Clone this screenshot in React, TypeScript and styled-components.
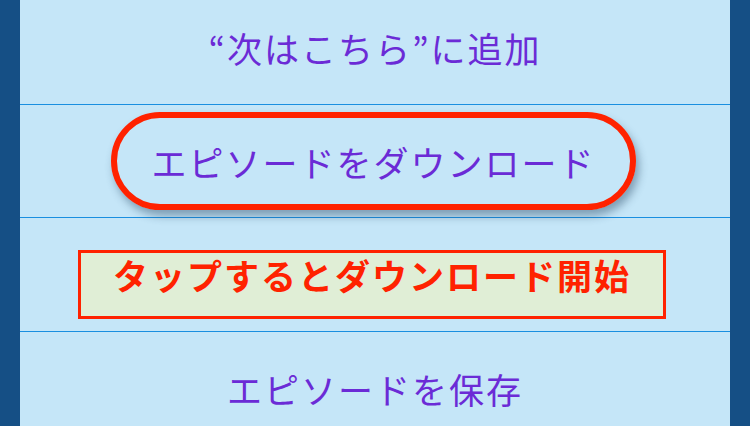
import styled, { createGlobalStyle } from "styled-components";

const GlobalStyle = createGlobalStyle`
  html, body {
    margin: 0;
    padding: 0;
    background: #c5e6f8;
    font-family: "Noto Sans CJK JP", "Noto Sans", sans-serif;
  }
`;

const Page = styled.div`
  display: flex;
  width: 750px;
  height: 426px;
  overflow: hidden;
`;

const SideBar = styled.div`
  width: 20px;
  flex-shrink: 0;
  background: #154f85;
`;

const Content = styled.div`
  flex: 1;
  display: flex;
  flex-direction: column;
  background: #c5e6f8;
`;

const Row = styled.div<{ $height: number; $last?: boolean; $padBottom?: number }>`
  display: flex;
  align-items: center;
  justify-content: center;
  height: ${props => props.$height}px;
  padding-bottom: ${props => props.$padBottom ?? 0}px;
  flex-shrink: 0;
  border-bottom: ${props => (props.$last ? "none" : "1px solid #1a8fe0")};
  box-sizing: border-box;
`;

const Label = styled.span`
  color: #6b2bd6;
  font-size: 35px;
  letter-spacing: 2px;
  line-height: 1;
`;

const Pill = styled.div`
  display: flex;
  align-items: center;
  justify-content: center;
  width: 525px;
  height: 98px;
  margin-left: -3px;
  box-sizing: border-box;
  border: 6px solid #ff2200;
  border-radius: 49px;
  box-shadow: 3px 6px 9px rgba(40, 70, 100, 0.45);
`;

const NoteRow = styled.div`
  display: flex;
  align-items: flex-start;
  height: 114px;
  flex-shrink: 0;
  padding-top: 32px;
  padding-left: 58px;
  border-bottom: 1px solid #1a8fe0;
  box-sizing: border-box;
`;

const NoteBox = styled.div`
  width: 588px;
  height: 69px;
  box-sizing: border-box;
  border: 3px solid #ff2200;
  background: #e0eed6;
  display: flex;
  justify-content: center;
  padding-top: 4px;
`;

const NoteText = styled.span`
  color: #ff2200;
  font-weight: 700;
  font-size: 35px;
  letter-spacing: 2px;
  line-height: 1;
`;

export default function App() {
  return (
    <Page>
      <GlobalStyle />
      <SideBar />
      <Content>
        <Row $height={105} $padBottom={10}>
          <Label>“次はこちら”に追加</Label>
        </Row>
        <Row $height={113}>
          <Pill>
            <Label>エピソードをダウンロード</Label>
          </Pill>
        </Row>
        <NoteRow>
          <NoteBox>
            <NoteText>タップするとダウンロード開始</NoteText>
          </NoteBox>
        </NoteRow>
        <Row $height={113} $last>
          <Label>エピソードを保存</Label>
        </Row>
      </Content>
      <SideBar />
    </Page>
  );
}
